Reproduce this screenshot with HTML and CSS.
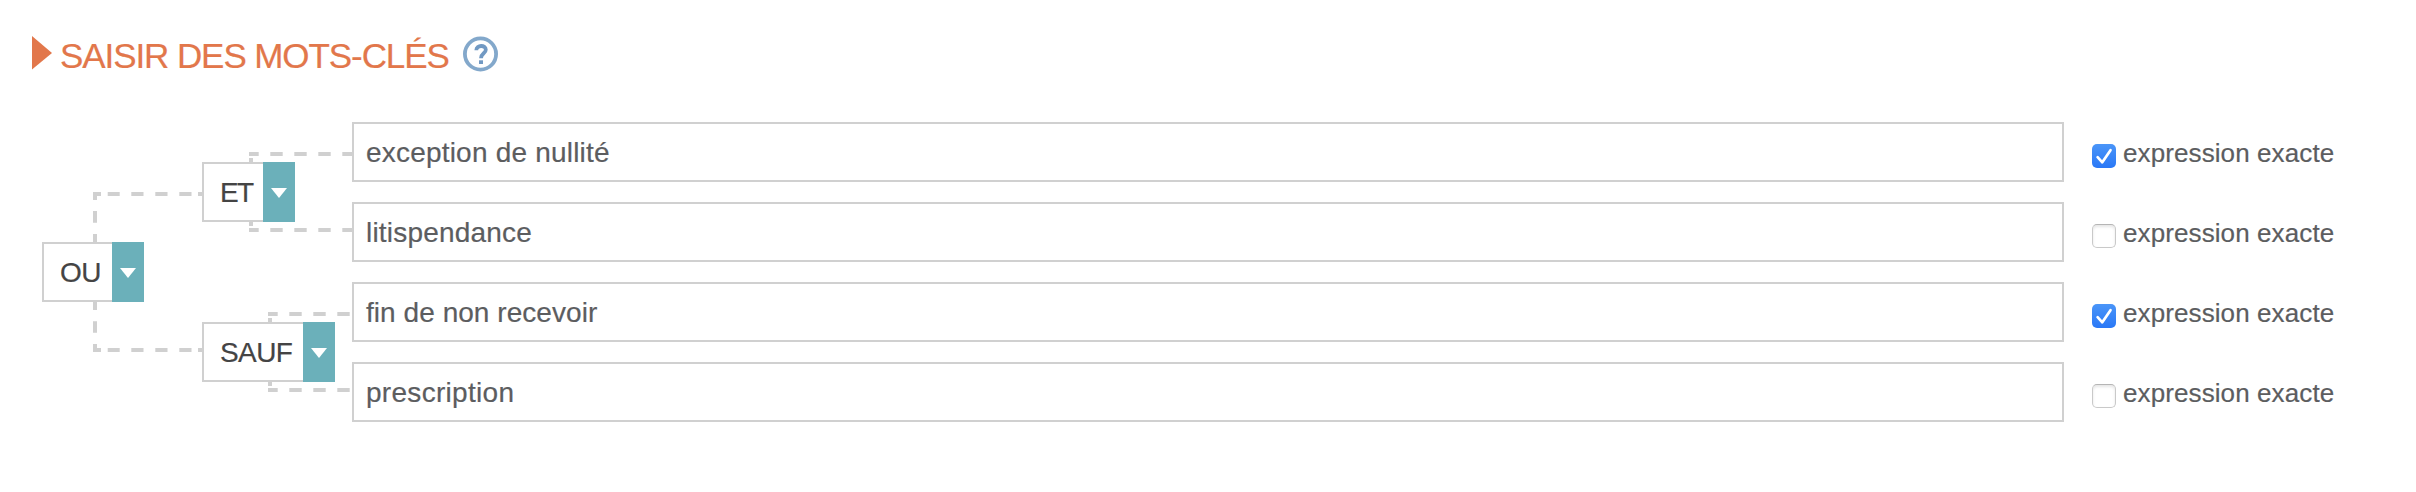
FILE: index.html
```html
<!DOCTYPE html>
<html lang="fr">
<head>
<meta charset="utf-8">
<title>Saisir des mots-clés</title>
<link rel="stylesheet" href="styles.css">
</head>
<body>
<header class="heading">
  <svg class="marker" width="20" height="34" viewBox="0 0 20 34"><path d="M0 0L20 17L0 33.500Z" fill="#e2774b"/></svg>
  <h1 class="title">SAISIR DES MOTS-CLÉS</h1>
  <svg class="help" width="36" height="36" viewBox="0 0 36 36" fill="none" stroke="#83a8cb"><circle cx="17.500" cy="18" r="15.600" stroke-width="3.800"/><path d="M13.300 14.200C13.500 8.700 22.800 8.700 22.800 13.700C22.800 17.400 18 17.200 18 22.300" stroke-width="3.800" stroke="#7199c3"/><path d="M18 24.300V28" stroke-width="4" stroke="#7199c3"/></svg>
</header>
<main class="query">
  <svg class="links" width="310" height="300" viewBox="42 122 310 300" fill="none" stroke="#d0d0d0" stroke-width="4">
    <path d="M93 194H101M107.700 194H119.700M131.300 194H143.500M155.300 194H167.500M179.300 194H191.500M198 194H202"/>
    <path d="M95 196V200M95 211V222.700M95 234V242"/>
    <path d="M95 302V310M95 321.300V332.700M95 344V348"/>
    <path d="M93 350H101M107.700 350H119.700M131.300 350H143.500M155.300 350H167.500M179.300 350H191.500M198 350H202"/>
    <path d="M249 154H258.700M270.300 154H282.700M294.300 154H306.700M318.300 154H330.700M342.300 154H352M251 158V162"/>
    <path d="M249 230H258.700M270.300 230H282.700M294.300 230H306.700M318.300 230H330.700M342.300 230H352M251 222V226"/>
    <path d="M268 314H277.700M289.300 314H301.700M313.300 314H325.700M337.300 314H349.700M270 318V322"/>
    <path d="M268 390H277.700M289.300 390H301.700M313.300 390H325.700M337.300 390H349.700M270 382V386"/>
  </svg>
  <div class="level root">
    <button class="operator ou"><span class="name">OU</span><span class="toggle"><svg width="16" height="10" viewBox="0 0 16 10"><path d="M0 0H16L8 10Z" fill="#fff"/></svg></span></button>
  </div>
  <div class="level groups">
    <button class="operator et"><span class="name">ET</span><span class="toggle"><svg width="16" height="10" viewBox="0 0 16 10"><path d="M0 0H16L8 10Z" fill="#fff"/></svg></span></button>
    <button class="operator sauf"><span class="name">SAUF</span><span class="toggle"><svg width="16" height="10" viewBox="0 0 16 10"><path d="M0 0H16L8 10Z" fill="#fff"/></svg></span></button>
  </div>
  <div class="terms">
    <div class="term"><div class="field t1">exception de nullité</div><label class="exact"><span class="box checked"><svg width="24" height="24" viewBox="0 0 24 24" fill="none" stroke="#fff" stroke-width="2.700" stroke-linecap="round" stroke-linejoin="round"><path d="M5.600 13.200L10.300 18.300L18.500 6.200"/></svg></span><span class="caption">expression exacte</span></label></div>
    <div class="term"><div class="field t2">litispendance</div><label class="exact"><span class="box"></span><span class="caption">expression exacte</span></label></div>
    <div class="term"><div class="field t3">fin de non recevoir</div><label class="exact"><span class="box checked"><svg width="24" height="24" viewBox="0 0 24 24" fill="none" stroke="#fff" stroke-width="2.700" stroke-linecap="round" stroke-linejoin="round"><path d="M5.600 13.200L10.300 18.300L18.500 6.200"/></svg></span><span class="caption">expression exacte</span></label></div>
    <div class="term"><div class="field t4">prescription</div><label class="exact"><span class="box"></span><span class="caption">expression exacte</span></label></div>
  </div>
</main>
</body>
</html>
```
FILE: styles.css
```css
* { box-sizing: border-box; }
body {
  margin: 0;
  padding: 36px 0 0;
  background: #fff;
  color: #5c5d5f;
  font-family: "Liberation Sans", Arial, sans-serif;
  -webkit-text-stroke: .2px currentColor;
}
.heading {
  display: flex;
  align-items: flex-start;
  height: 86px;
  padding-left: 32px;
}
.title {
  margin: 0 0 0 8px;
  width: 403px;
  font-size: 35px;
  line-height: 39px;
  font-weight: 400;
  letter-spacing: -1.08px;
  color: #e2774b;
  white-space: nowrap;
}
.query {
  position: relative;
  display: flex;
  height: 300px;
  margin-left: 42px;
}
.links {
  position: absolute;
  inset: 0 auto auto 0;
}
.level {
  display: flex;
  flex-direction: column;
  position: relative;
}
.root { width: 160px; justify-content: center; }
.groups { width: 150px; justify-content: space-around; gap: 20px; }
.operator {
  display: flex;
  height: 60px;
  padding: 0;
  border: 0;
  background: #fff;
  color: #444;
  font: 28px/58px "Liberation Sans", Arial, sans-serif;
  -webkit-text-stroke: .2px currentColor;
}
.ou { width: 102px; }
.et { width: 93px; }
.sauf { width: 133px; }
.name {
  flex: 1;
  height: 60px;
  padding-left: 16px;
  border: 2px solid #d0d0d0;
  border-right: 0;
  text-align: left;
  letter-spacing: -.6px;
}
.et .name { letter-spacing: -1.8px; }
.toggle {
  display: flex;
  justify-content: center;
  width: 32px;
  height: 60px;
  padding-top: 26px;
  background: #6bb0ba;
}
.terms {
  display: flex;
  flex-direction: column;
  gap: 20px;
}
.term { display: flex; gap: 28px; height: 60px; }
.field {
  width: 1712px;
  height: 60px;
  padding-left: 12px;
  border: 2px solid #d0d0d0;
  background: #fff;
  font-size: 28px;
  line-height: 58px;
  letter-spacing: .2px;
}
.t3 { letter-spacing: .05px; }
.t4 { letter-spacing: .3px; }
.exact { display: flex; gap: 7px; }
.box {
  width: 24px;
  height: 24px;
  margin-top: 22px;
  border: 1px solid #c9c9c9;
  border-top-color: #b5b5b5;
  border-radius: 5px;
  box-shadow: inset 0 2px 3px #e6e6e6;
}
.checked {
  border: 0;
  background: linear-gradient(#4a95f8, #2a78f6);
  box-shadow: none;
}
.box svg { display: block; }
.caption { font-size: 26px; line-height: 62px; letter-spacing: .1px; white-space: nowrap; }
```
